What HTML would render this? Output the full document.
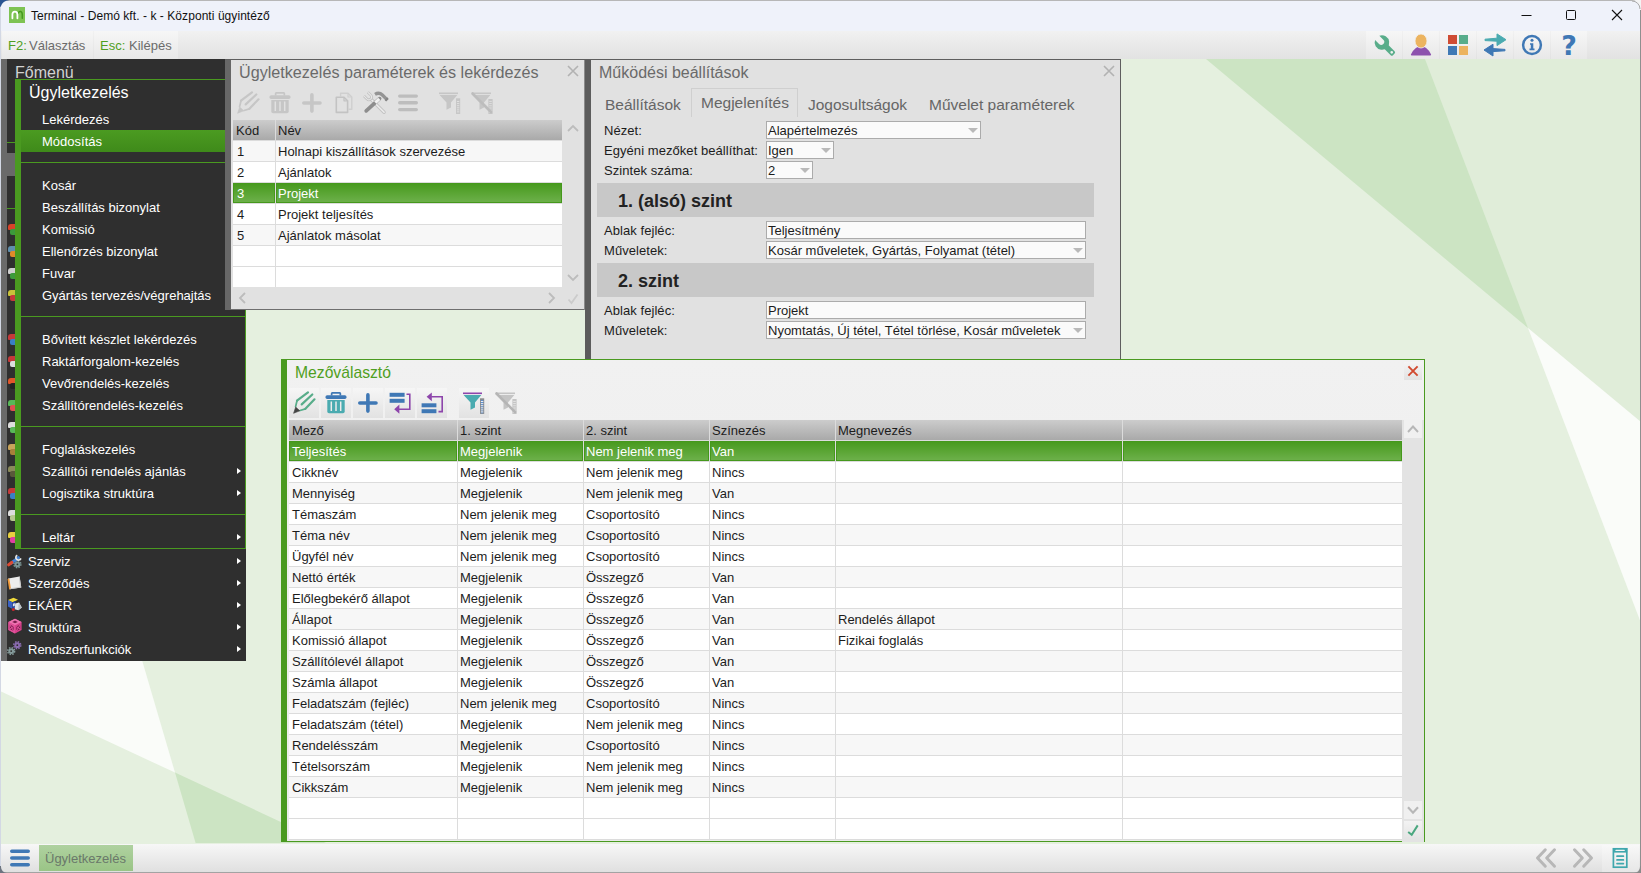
<!DOCTYPE html>
<html lang="hu"><head><meta charset="utf-8"><title>Terminal - Demó kft. - k - Központi ügyintéző</title>
<style>
*{box-sizing:border-box;margin:0;padding:0}
html,body{width:1641px;height:873px;overflow:hidden}
body{position:relative;background:#e5f0df;font-family:"Liberation Sans",sans-serif;font-size:13px;color:#1c1c1c;line-height:1}
.a{position:absolute}
svg{position:absolute;overflow:visible}
/* title bar */
#tb{left:0;top:0;width:1641px;height:31px;background:#eff2fa}
#tb .t{left:31px;top:10px;font-size:12px;color:#111;white-space:nowrap;letter-spacing:.06px}
#tool{left:0;top:31px;width:1641px;height:28px;background:linear-gradient(#f1f1f1,#e2e2e2)}
.tbtn{top:0;height:28px;background:linear-gradient(#f6f6f6,#e8e8e8)}
.tbtn span{position:absolute;top:8px;font-size:13px;white-space:nowrap}
.g{color:#4f9f22}.gr{color:#6b6b6b}
.ibtn{top:0;width:36px;height:28px;background:linear-gradient(#f6f6f6,#e8e8e8)}
/* menu */
#mm{left:1px;top:59px;width:245px;height:602px;background:#2f2f2f}
#mm .strip{left:0;top:0;width:6px;height:602px;background:#6a6a6a}
#sm{left:15px;top:79px;width:231px;height:470px;background:#2f2f2f;border-top:1px solid #4a9a20;border-bottom:1px solid #4a9a20;border-right:1px solid #4a9a20;border-left:6px solid #4a9a20}
.mi{left:0;height:22px;line-height:24px;color:#fff;font-size:13px;white-space:nowrap}
.sep{height:1px;background:#4a9a20}
.arr{width:0;height:0;border-left:4px solid #fff;border-top:3.5px solid transparent;border-bottom:3.5px solid transparent;margin-top:.5px}
/* panels */
.ptitle{font-size:16px;color:#6a6a6a;white-space:nowrap}
.hdr{background:linear-gradient(#d2d2d2,#aaaaaa);height:20px}
.hc{top:0;height:20px;line-height:21px;font-size:13px;color:#1c1c1c;white-space:nowrap;background:linear-gradient(#cccccc,#a9a9a9)}
.row{left:0;height:21px}
.c{top:0;height:20px;line-height:21px;font-size:13px;white-space:nowrap;overflow:hidden;background:#fff}
.alt .c{background:#f7f7f7}
.sel .c{background:linear-gradient(#46991c,#6eb14c);color:#fff;box-shadow:inset 0 0 0 1px #45981c}
.grid{background:#dcdcdc;overflow:hidden}
.lbl{font-size:13px;white-space:nowrap;color:#1c1c1c;letter-spacing:.06px}
.inp{height:17px;border:1px solid #ababab;background:#fafafa;font-size:13px;line-height:17px;padding-left:1px;white-space:nowrap;overflow:hidden;color:#1c1c1c}
.dd{width:0;height:0;border-top:5px solid #b9b9b9;border-left:5px solid transparent;border-right:5px solid transparent}
.sec{left:6px;width:497px;height:34px;background:#c8c8c8;font-weight:bold;font-size:18px;color:#222;line-height:36px;padding-left:21px;white-space:nowrap}
.b30{width:30px;height:30px;background:linear-gradient(#f6f6f6,#e2e2e2)}
</style></head><body>
<!-- bg.html -->
<svg class="a" style="left:0;top:59px" width="1641" height="784" viewBox="0 59 1641 784">
<rect x="0" y="59" width="1641" height="784" fill="#e5f0df"/>
<polygon points="1425,59 1641,59 1641,422 1528,328" fill="#e0edd9"/>
<polygon points="1206,59 1425,59 1528,328" fill="#cce4c3"/>
<polygon points="1528,328 1641,422 1641,623" fill="#fafcf9"/>
<polygon points="175,772.6 0,691 0,176" fill="#fafcf9"/>
<polygon points="175,772.6 195.6,843 326,843" fill="#cce4c3"/>
</svg>

<!-- titlebar.html -->
<div id="tb" class="a">
<svg style="left:9px;top:7px" width="16" height="16" viewBox="0 0 16 16"><rect width="16" height="16" fill="#7ec353"/><path d="M9.2 6.2c.5-1.2 1.4-1.8 2.4-1.6c1.3.3 1.7 1.6 1.7 3.2v3.4" fill="none" stroke="#459a1e" stroke-width="1.5" stroke-linecap="round"/><path d="M3.4 11.3V7.4c0-1.9.9-2.8 2.5-2.8s2.5.9 2.500 2.800v3.900" fill="none" stroke="#fff" stroke-width="1.8" stroke-linecap="round"/></svg>
<div class="a t">Terminal - Demó kft. - k - Központi ügyintéző</div>
<svg style="left:1515px;top:5px" width="120" height="20" viewBox="1515 5 120 20"><path d="M1521.5 15.5h10" stroke="#111" stroke-width="1" fill="none"/><rect x="1566.5" y="10.5" width="9" height="9" rx="1" fill="none" stroke="#111" stroke-width="1"/><path d="M1612 10l10 10M1622 10l-10 10" stroke="#111" stroke-width="1.1" fill="none"/></svg>
</div>
<div id="tool" class="a">
<div class="a tbtn" style="left:2px;width:91px"><span class="g" style="left:6px">F2:</span><span class="gr" style="left:27px">Választás</span></div>
<div class="a tbtn" style="left:94px;width:84px"><span class="g" style="left:6px">Esc:</span><span class="gr" style="left:35px">Kilépés</span></div>
<div class="a ibtn" style="left:1366px"></div>
<div class="a ibtn" style="left:1403px"></div>
<div class="a ibtn" style="left:1440px"></div>
<div class="a ibtn" style="left:1477px"></div>
<div class="a ibtn" style="left:1514px"></div>
<div class="a ibtn" style="left:1551px"></div>
<svg style="left:1366px;top:0" width="222" height="28" viewBox="1366 31 222 28">
<!-- wrench -->
<g transform="translate(1381.9,42.5) rotate(-45)"><path d="M-3 -6.65A7.3 7.3 0 1 0 3 -6.65V-1A3 3 0 0 1 -3 -1Z" fill="#59ad8a"/><path d="M-2.75 5V15.200A1.600 1.600 0 0 0 -1.150 16.8H1.150A1.600 1.600 0 0 0 2.75 15.200V5Z" fill="#59ad8a"/><circle cx="0" cy="13.9" r="1.35" fill="#efefef"/></g>
<!-- user -->
<path d="M1410.9 54.6Q1413 50 1415.6 48.2Q1417 47 1419 47H1423Q1425 47 1426.4 48.2Q1429 50 1431.1 54.6Q1431.3 55.4 1430.4 55.4H1411.6Q1410.700 55.4 1410.9 54.6Z" fill="#8d52ae"/>
<ellipse cx="1421" cy="41" rx="6" ry="7" fill="#ecb45f" stroke="#f1f1f1" stroke-width=".8"/>
<!-- squares -->
<rect x="1448" y="35" width="9" height="9" fill="#cf4c33"/><rect x="1459" y="35" width="9" height="9" fill="#58ad8a"/>
<rect x="1448" y="46" width="9" height="9" fill="#3f78b5"/><rect x="1459" y="46" width="9" height="9" fill="#ecb35f"/>
<!-- arrows -->
<path d="M1485 39.2 L1497 38.2 L1497 33.9 L1506 39.7 L1497 45.6 L1497 41.2 L1485 40.6z" fill="#4aabb0" stroke="#4aabb0" stroke-width="1" stroke-linejoin="round"/>
<path d="M1505 49.4 L1493 48.6 L1493 44.2 L1484 50 L1493 56 L1493 51.6 L1505 50.8z" fill="#3f78b5" stroke="#3f78b5" stroke-width="1" stroke-linejoin="round"/>
<!-- info -->
<circle cx="1532" cy="45" r="8.9" fill="none" stroke="#3f78b5" stroke-width="2.5"/>
<circle cx="1532" cy="40.2" r="1.5" fill="#3f78b5"/><path d="M1530 43.2h3.3v5.4h1.2v1.6h-5v-1.6h1.3v-3.8h-.8z" fill="#3f78b5"/>
<text x="1569" y="55" text-anchor="middle" font-family="DejaVu Sans, Liberation Sans, sans-serif" font-weight="bold" font-size="27" fill="#3f78b5">?</text>
</svg>
</div>

<!-- menu.html -->
<div id="mm" class="a">
<div class="a strip"></div>
<div class="a" style="left:14px;top:6px;font-size:16px;color:#d2d2d2;white-space:nowrap">Főmenü</div>
<div class="a sep" style="left:6px;top:83px;width:8px"></div>
<div class="a" style="left:6px;top:94px;width:8px;height:23px;background:#696969"></div>
<div class="a sep" style="left:6px;top:149px;width:8px"></div>
<div class="a" style="left:7px;top:165px;width:7px;height:6px;background:#d8432a;border-radius:3px 0 0 1px"></div><div class="a" style="left:9px;top:170px;width:5px;height:6px;background:#3c9a3c;border-radius:2px 0 0 2px"></div>
<div class="a" style="left:7px;top:187px;width:7px;height:6px;background:#5f8fae;border-radius:3px 0 0 1px"></div><div class="a" style="left:9px;top:192px;width:5px;height:6px;background:#e08a2a;border-radius:2px 0 0 2px"></div>
<div class="a" style="left:7px;top:209px;width:7px;height:6px;background:#cfcfcf;border-radius:3px 0 0 1px"></div><div class="a" style="left:9px;top:214px;width:5px;height:6px;background:#3c9a3c;border-radius:2px 0 0 2px"></div>
<div class="a" style="left:7px;top:231px;width:7px;height:6px;background:#c9c23a;border-radius:3px 0 0 1px"></div><div class="a" style="left:9px;top:236px;width:5px;height:6px;background:#c53a3a;border-radius:2px 0 0 2px"></div>
<div class="a" style="left:7px;top:275px;width:7px;height:6px;background:#c53a3a;border-radius:3px 0 0 1px"></div><div class="a" style="left:9px;top:280px;width:5px;height:6px;background:#3a7fc5;border-radius:2px 0 0 2px"></div>
<div class="a" style="left:7px;top:297px;width:7px;height:6px;background:#c53a3a;border-radius:3px 0 0 1px"></div><div class="a" style="left:9px;top:302px;width:5px;height:6px;background:#dddddd;border-radius:2px 0 0 2px"></div>
<div class="a" style="left:7px;top:319px;width:7px;height:6px;background:#e0562a;border-radius:3px 0 0 1px"></div><div class="a" style="left:9px;top:324px;width:5px;height:6px;background:#222222;border-radius:2px 0 0 2px"></div>
<div class="a" style="left:7px;top:341px;width:7px;height:6px;background:#58b858;border-radius:3px 0 0 1px"></div><div class="a" style="left:9px;top:346px;width:5px;height:6px;background:#e05050;border-radius:2px 0 0 2px"></div>
<div class="a" style="left:7px;top:363px;width:7px;height:6px;background:#dddddd;border-radius:3px 0 0 1px"></div><div class="a" style="left:9px;top:368px;width:5px;height:6px;background:#58b858;border-radius:2px 0 0 2px"></div>
<div class="a" style="left:7px;top:385px;width:7px;height:6px;background:#c9a45a;border-radius:3px 0 0 1px"></div><div class="a" style="left:9px;top:390px;width:5px;height:6px;background:#a8803a;border-radius:2px 0 0 2px"></div>
<div class="a" style="left:7px;top:407px;width:7px;height:6px;background:#8a8a5a;border-radius:3px 0 0 1px"></div><div class="a" style="left:9px;top:412px;width:5px;height:6px;background:#5a5a3a;border-radius:2px 0 0 2px"></div>
<div class="a" style="left:7px;top:429px;width:7px;height:6px;background:#c53a3a;border-radius:3px 0 0 1px"></div><div class="a" style="left:9px;top:434px;width:5px;height:6px;background:#3a7fc5;border-radius:2px 0 0 2px"></div>
<div class="a" style="left:7px;top:451px;width:7px;height:6px;background:#dddddd;border-radius:3px 0 0 1px"></div><div class="a" style="left:9px;top:456px;width:5px;height:6px;background:#b8c890;border-radius:2px 0 0 2px"></div>
<div class="a" style="left:7px;top:473px;width:7px;height:6px;background:#e8d040;border-radius:3px 0 0 1px"></div><div class="a" style="left:9px;top:478px;width:5px;height:6px;background:#e040a0;border-radius:2px 0 0 2px"></div>
<div class="a mi" style="left:27px;top:491px">Szerviz</div><div class="a arr" style="left:236px;top:498px"></div>
<div class="a mi" style="left:27px;top:513px">Szerződés</div><div class="a arr" style="left:236px;top:520px"></div>
<div class="a mi" style="left:27px;top:535px">EKÁER</div><div class="a arr" style="left:236px;top:542px"></div>
<div class="a mi" style="left:27px;top:557px">Struktúra</div><div class="a arr" style="left:236px;top:564px"></div>
<div class="a mi" style="left:27px;top:579px">Rendszerfunkciók</div><div class="a arr" style="left:236px;top:586px"></div>
<svg style="left:6px;top:492px" width="16" height="110" viewBox="0 0 16 110">
<g><circle cx="10.4" cy="13.3" r="2.9" fill="#7c9797"/><circle cx="10.4" cy="13.3" r="3.5" fill="none" stroke="#7c9797" stroke-width="1.4" stroke-dasharray="1.55 1.2"/><circle cx="10.4" cy="13.3" r=".9" fill="#2f2f2f"/><path d="M4 12.2L11.400 6.700" stroke="#3f80d6" stroke-width="3" stroke-linecap="round"/><path d="M1.700 13.800L4.800 11.500" stroke="#dc4a33" stroke-width="3.2" stroke-linecap="round"/><path d="M10.300 4.200a2.600 2.600 0 1 0 3.600 3.200" fill="none" stroke="#e4e4e4" stroke-width="1.700"/></g>
<g transform="translate(0,22)"><path d="M1.200 5.600L12.600 3.400L14.300 14.600L2.800 16.300z" fill="#ededed"/><path d="M.500 6L2.300 5.500L4 16L2.200 16.500z" fill="#f09a3a"/><path d="M12.600 3.400L14.300 14.600L2.800 16.300L3.400 15.300L13 13.800L11.800 3.600z" fill="#c9c9c9"/></g>
<g transform="translate(0,44)"><path d="M1 5L6.500 2.800L11 4.800L5.500 7.200z" fill="#f2dc3c"/><path d="M1 5L5.500 7.200V14L1 11.600z" fill="#3b62c4"/><path d="M5.500 7.200L8.500 6V12.500L5.500 14z" fill="#2447a8"/><path d="M8.200 8.600L12 7.400L14.800 12.600L11.400 15.200L7.600 14.300z" fill="#e1e5e8"/><path d="M11.400 15.200L14.800 12.600L12 7.400L11.400 11z" fill="#b9c0c6"/><circle cx="6.300" cy="14.500" r="1.500" fill="#c2282d"/><path d="M5.900 8.800l1.900-.700v2.600l-1.900.700z" fill="#e8e8e8"/></g>
<g transform="translate(0,66)"><path d="M8 1.800L14.600 5V13L8 16.400L1.400 13V5z" fill="#d9408c"/><path d="M8 1.800L14.600 5L8 8.200L1.400 5z" fill="#ee74b2"/><path d="M8 8.200V16.400L1.400 13V5z" fill="#e0529a"/><path d="M2.800 7.600L6.600 9.500V14L2.800 12.100z M13.200 7.600L9.400 9.500V14L13.200 12.100z" fill="#7a1c4d"/><path d="M2.800 7.600L6.600 14M6.600 9.500L2.800 12.100M13.200 7.600L9.400 14M9.400 9.500L13.200 12.100" stroke="#e0529a" stroke-width="1"/><path d="M5.200 4.900L8 3.600L10.800 4.900L8 6.300z" fill="#7a1c4d"/></g>
<g transform="translate(0,88)"><circle cx="10.3" cy="6.2" r="2.9" fill="#8a6cb0"/><circle cx="10.3" cy="6.2" r="3.5" fill="none" stroke="#8a6cb0" stroke-width="1.4" stroke-dasharray="1.55 1.2"/><circle cx="10.3" cy="6.2" r=".9" fill="#2f2f2f"/><circle cx="4.2" cy="12.1" r="2.9" fill="#849a9a"/><circle cx="4.2" cy="12.1" r="3.5" fill="none" stroke="#849a9a" stroke-width="1.4" stroke-dasharray="1.55 1.2"/><circle cx="4.2" cy="12.1" r=".9" fill="#2f2f2f"/></g>
</svg>
</div>
<div id="sm" class="a">
<div class="a" style="left:8px;top:5px;font-size:16px;color:#fff;white-space:nowrap">Ügyletkezelés</div>
<div class="a mi" style="left:21px;top:28px">Lekérdezés</div>
<div class="a" style="left:0;top:50px;width:224px;height:22px;background:linear-gradient(#4b9b21,#3f8a1a)"></div>
<div class="a mi" style="left:21px;top:50px">Módosítás</div>
<div class="a mi" style="left:21px;top:94px">Kosár</div>
<div class="a mi" style="left:21px;top:116px">Beszállítás bizonylat</div>
<div class="a mi" style="left:21px;top:138px">Komissió</div>
<div class="a mi" style="left:21px;top:160px">Ellenőrzés bizonylat</div>
<div class="a mi" style="left:21px;top:182px">Fuvar</div>
<div class="a mi" style="left:21px;top:204px">Gyártás tervezés/végrehajtás</div>
<div class="a mi" style="left:21px;top:248px">Bővített készlet lekérdezés</div>
<div class="a mi" style="left:21px;top:270px">Raktárforgalom-kezelés</div>
<div class="a mi" style="left:21px;top:292px">Vevőrendelés-kezelés</div>
<div class="a mi" style="left:21px;top:314px">Szállítórendelés-kezelés</div>
<div class="a mi" style="left:21px;top:358px">Foglaláskezelés</div>
<div class="a mi" style="left:21px;top:380px">Szállítói rendelés ajánlás</div>
<div class="a arr" style="left:216px;top:387px"></div>
<div class="a mi" style="left:21px;top:402px">Logisztika struktúra</div>
<div class="a arr" style="left:216px;top:409px"></div>
<div class="a mi" style="left:21px;top:446px">Leltár</div>
<div class="a arr" style="left:216px;top:453px"></div>
<div class="a sep" style="left:0;top:82px;width:225px"></div>
<div class="a sep" style="left:0;top:236px;width:225px"></div>
<div class="a sep" style="left:0;top:346px;width:225px"></div>
<div class="a sep" style="left:0;top:434px;width:225px"></div>
</div>
<!-- panel1.html -->
<div id="p1" class="a" style="left:225px;top:59px;width:360px;height:251px;background:#e1e1e1">
<div class="a" style="left:0;top:0;width:6px;height:251px;background:#676767"></div>
<div class="a" style="left:0;top:0;width:360px;height:1px;background:#5e5e5e"></div>
<div class="a" style="left:6px;top:250px;width:354px;height:1px;background:#6e6e6e"></div>
<div class="a" style="left:359px;top:1px;width:1px;height:250px;background:#8c8c8c"></div>
<div class="a ptitle" style="left:14px;top:5px;font-size:16.15px">Ügyletkezelés paraméterek és lekérdezés</div>
<svg style="left:342px;top:6px" width="12" height="12" viewBox="0 0 12 12"><path d="M1 1l10 10M11 1L1 11" stroke="#b2b2b2" stroke-width="1.6" fill="none"/></svg>
<svg style="left:8px;top:29px" width="280" height="30" viewBox="233 88 280 30">
<g transform="translate(-56,-300)"><g fill="none" stroke="#c6c6c6" stroke-width="2.2" stroke-linecap="round" stroke-linejoin="round"><path d="M297 400.7L308 392.3M301.7 404.4L312.3 394.5M305.4 408.8L314.5 399.3"/><path d="M297 400.7L295.6 406.6M305.4 408.8L300 410.5" stroke-width="1.76"/></g><path d="M293.6 413.3L295.7 407.1L299.8 410.8z" fill="#c6c6c6" stroke="#c6c6c6" stroke-width=".6" stroke-linejoin="round"/><g fill="#c6c6c6"><rect x="325.5" y="395.2" width="21" height="3.7" rx="1.6"/><path d="M330.8 395.4v-1.8a1.5 1.5 0 0 1 1.5-1.5h7.4a1.5 1.5 0 0 1 1.5 1.5v1.8h-1.7v-1.6h-7v1.6z"/></g><path d="M327.3 400h17.4v11.6a1.7 1.7 0 0 1-1.7 1.7h-14a1.7 1.7 0 0 1-1.7-1.7z" fill="#c6c6c6"/><path d="M331.3 401.5v9.6M336 401.5v9.6M340.7 401.5v9.6" stroke="#e1e1e1" stroke-width="1.5"/><path d="M359.8 403h16.2M367.9 394.9v16.2" stroke="#c6c6c6" stroke-width="3.6" stroke-linecap="round" fill="none"/></g>
<g transform="translate(0,0)">
<g fill="none" stroke-linejoin="round"><path d="M340.600 96.600V93.200H348L351.800 97V109.200H348.600" stroke="#cfcfcf" stroke-width="1.400"/><path d="M348 93.200V97H351.800" stroke="#cfcfcf" stroke-width="1.200"/><path d="M336.300 97.200H344L347.600 100.800V112.400H336.300Z" stroke="#c3c3c3" stroke-width="1.600"/><path d="M344 97.200V100.800H347.600" stroke="#c3c3c3" stroke-width="1.300"/></g>
<g fill="none"><g transform="translate(369.600,97.800) rotate(-45)"><path d="M0 2V20.500" stroke="#c4c4c4" stroke-width="3.400" stroke-linecap="round"/><path d="M0 3V20.500" stroke="#ececec" stroke-width="1.500" stroke-linecap="round"/><path d="M-2.700 -5.200V-1A2.700 2.700 0 0 0 2.700 -1V-5.200" stroke="#c2c2c2" stroke-width="2.600"/><path d="M-2.700 -5V-1A2.700 2.700 0 0 0 2.700 -1V-5" stroke="#eaeaea" stroke-width="1"/></g><path d="M366.200 110.900L379.600 98.600" stroke="#8d8d8d" stroke-width="3.700" stroke-linecap="round"/><path d="M375.300 102.600L379.300 98.900" stroke="#f1f1f1" stroke-width="3.200"/><path d="M375 94.300Q379 91.800 382.400 95L387 99.600" stroke="#949494" stroke-width="3.300"/><path d="M385.400 100.700L388 98.100" stroke="#858585" stroke-width="2.200"/></g>
<path d="M399.700 96.100h16.600M399.700 102.800h16.600M399.700 109.600h16.600" stroke="#bdbdbd" stroke-width="3.400" stroke-linecap="round" fill="none"/>
</g>
<g transform="translate(-24,-300)"><rect x="463" y="392.5" width="19" height="1.6" fill="#c6c6c6"/><path d="M463.6 395h17.7l-6.3 7.4v5l-4.5 2.4v-7.4z" fill="#c6c6c6"/><rect x="480" y="398.3" width="4.2" height="15.6" fill="#c6c6c6"/><path d="M480.9 400.4h2.4M480.9 402.5h2.4M480.9 404.6h2.4M480.9 406.7h2.4M480.9 408.8h2.4M480.9 410.9h2.4M480.9 412.8h2.4" stroke="#c6c6c6" stroke-width="1"/><path d="M480.9 401.5h2.4M480.9 403.6h2.4M480.9 405.7h2.4M480.9 407.8h2.4M480.9 409.9h2.4M480.9 411.9h2.4" stroke="#e1e1e1" stroke-width="1"/></g>
<g transform="translate(-24,-300)"><g fill="#c6c6c6"><rect x="496" y="392.5" width="19" height="1.6"/><path d="M496.6 395h17.7l-6.3 7.4v5l-4.5 2.4v-7.4z"/><rect x="512.4" y="399" width="4.2" height="15"/></g><path d="M513.2 401.4h2.6M513.2 403.6h2.6M513.2 405.8h2.6M513.2 408h2.6M513.2 410.2h2.6M513.2 412.4h2.6" stroke="#e1e1e1" stroke-width=".9"/><path d="M496.5 393.5l18.5 18.5" stroke="#bdbdbd" stroke-width="2.6" stroke-linecap="round"/></g>
</svg>
<div class="a grid" style="left:8px;top:61px;width:329px;height:167px">
<div class="a hc" style="left:0;width:42px;padding-left:3px">Kód</div><div class="a hc" style="left:43px;width:286px;padding-left:2px">Név</div>
<div class="row a alt" style="top:21px;width:329px"><div class="a c" style="left:0;width:42px;padding-left:4px">1</div><div class="a c" style="left:43px;width:286px;padding-left:2px">Holnapi kiszállítások szervezése</div></div>
<div class="row a" style="top:42px;width:329px"><div class="a c" style="left:0;width:42px;padding-left:4px">2</div><div class="a c" style="left:43px;width:286px;padding-left:2px">Ajánlatok</div></div>
<div class="row a sel" style="top:63px;width:329px"><div class="a c" style="left:0;width:42px;padding-left:4px">3</div><div class="a c" style="left:43px;width:286px;padding-left:2px">Projekt</div></div>
<div class="row a" style="top:84px;width:329px"><div class="a c" style="left:0;width:42px;padding-left:4px">4</div><div class="a c" style="left:43px;width:286px;padding-left:2px">Projekt teljesítés</div></div>
<div class="row a alt" style="top:105px;width:329px"><div class="a c" style="left:0;width:42px;padding-left:4px">5</div><div class="a c" style="left:43px;width:286px;padding-left:2px">Ajánlatok másolat</div></div>
<div class="row a" style="top:126px;width:329px"><div class="a c" style="left:0;width:42px;padding-left:4px"></div><div class="a c" style="left:43px;width:286px;padding-left:2px"></div></div>
<div class="row a" style="top:147px;width:329px"><div class="a c" style="left:0;width:42px;padding-left:4px"></div><div class="a c" style="left:43px;width:286px;padding-left:2px"></div></div>
</div>
<svg style="left:338px;top:61px" width="22" height="190" viewBox="563 120 22 190" fill="none" stroke="#bcbcbc" stroke-width="1.8"><path d="M568 131l5-5l5 5"/><path d="M568 275l5 5l5-5"/><path d="M568.5 299.5l3 3.5l6-8.5" stroke="#cbcbcb"/></svg>
<svg style="left:8px;top:229px" width="330" height="20" viewBox="233 288 330 20" fill="none" stroke="#bcbcbc" stroke-width="1.8"><path d="M245 293l-5 5l5 5"/><path d="M549 293l5 5l-5 5"/></svg>
</div>
<!-- panel2.html -->
<div id="p2" class="a" style="left:585px;top:59px;width:536px;height:301px;background:#e1e1e1">
<div class="a" style="left:0;top:0;width:6px;height:301px;background:#5c5c5c"></div>
<div class="a" style="left:0;top:0;width:536px;height:1px;background:#5e5e5e"></div>
<div class="a" style="left:535px;top:0;width:1px;height:301px;background:#5e5e5e"></div>
<div class="a ptitle" style="left:14px;top:6px">Működési beállítások</div>
<svg style="left:518px;top:6px" width="12" height="12" viewBox="0 0 12 12"><path d="M1 1l10 10M11 1L1 11" stroke="#b2b2b2" stroke-width="1.6" fill="none"/></svg>
<div class="a" style="left:106px;top:29px;width:107px;height:29px;border:1px solid #cfcfcf;border-bottom:none"></div>
<div class="a" style="left:20px;top:38px;font-size:15.5px;color:#666;white-space:nowrap">Beállítások</div>
<div class="a" style="left:116px;top:36px;font-size:15.5px;color:#666;white-space:nowrap">Megjelenítés</div>
<div class="a" style="left:223px;top:38px;font-size:15.5px;color:#666;white-space:nowrap">Jogosultságok</div>
<div class="a" style="left:344px;top:38px;font-size:15.5px;color:#666;white-space:nowrap">Művelet paraméterek</div>
<div class="a lbl" style="left:19px;top:65px">Nézet:</div>
<div class="a inp" style="left:181px;top:62px;width:215px;height:18px">Alapértelmezés</div>
<div class="a dd" style="left:382.5px;top:68.5px"></div>
<div class="a lbl" style="left:19px;top:85px">Egyéni mezőket beállíthat:</div>
<div class="a inp" style="left:181px;top:82px;width:68px;height:18px">Igen</div>
<div class="a dd" style="left:235.5px;top:88.5px"></div>
<div class="a lbl" style="left:19px;top:105px">Szintek száma:</div>
<div class="a inp" style="left:181px;top:102px;width:47px;height:18px">2</div>
<div class="a dd" style="left:214.5px;top:108.5px"></div>
<div class="a sec" style="left:12px;top:124px">1. (alsó) szint</div>
<div class="a lbl" style="left:19px;top:165px">Ablak fejléc:</div>
<div class="a inp" style="left:181px;top:162px;width:320px;height:18px">Teljesítmény</div>
<div class="a lbl" style="left:19px;top:185px">Műveletek:</div>
<div class="a inp" style="left:181px;top:182px;width:320px;height:18px">Kosár műveletek, Gyártás, Folyamat (tétel)</div>
<div class="a dd" style="left:487.5px;top:188.5px"></div>
<div class="a sec" style="left:12px;top:204px">2. szint</div>
<div class="a lbl" style="left:19px;top:245px">Ablak fejléc:</div>
<div class="a inp" style="left:181px;top:242px;width:320px;height:18px">Projekt</div>
<div class="a lbl" style="left:19px;top:265px">Műveletek:</div>
<div class="a inp" style="left:181px;top:262px;width:320px;height:18px">Nyomtatás, Új tétel, Tétel törlése, Kosár műveletek</div>
<div class="a dd" style="left:487.5px;top:268.5px"></div>
</div>
<!-- panel3.html -->
<div id="p3" class="a" style="left:281px;top:359px;width:1144px;height:483px;background:linear-gradient(#f1f1f1,#ebebeb)">
<div class="a" style="left:0;top:0;width:6px;height:483px;background:#4a9a20"></div>
<div class="a" style="left:0;top:0;width:1144px;height:1px;background:#4a9a20"></div>
<div class="a" style="left:1143px;top:0;width:1px;height:483px;background:#4a9a20"></div>
<div class="a" style="left:0;top:482px;width:1144px;height:1px;background:#4a9a20"></div>
<div class="a ptitle" style="left:14px;top:6px;color:#4f9f22;font-size:15.7px">Mezőválasztó</div>
<div class="a" style="left:1123px;top:3px;width:18px;height:18px;background:linear-gradient(#f4f4f4,#e2e2e2)"></div>
<svg style="left:1127px;top:7px" width="10" height="10" viewBox="0 0 10 10"><path d="M.4 .4l9.200 9.200M9.600 .4L.4 9.600" stroke="#d1492f" stroke-width="1.9" fill="none"/></svg>
<div class="a b30" style="left:8px;top:29px"></div>
<div class="a b30" style="left:40px;top:29px"></div>
<div class="a b30" style="left:72px;top:29px"></div>
<div class="a b30" style="left:104px;top:29px"></div>
<div class="a b30" style="left:136px;top:29px"></div>
<div class="a b30" style="left:178px;top:29px"></div>
<svg style="left:8px;top:29px" width="240" height="30" viewBox="289 388 240 30">
<g fill="none" stroke="#58ad8a" stroke-width="2.2" stroke-linecap="round" stroke-linejoin="round"><path d="M297 400.7L308 392.3M301.7 404.4L312.3 394.5M305.4 408.8L314.5 399.3"/><path d="M297 400.7L295.6 406.6M305.4 408.8L300 410.5" stroke-width="1.76"/></g><path d="M293.6 413.3L295.7 407.1L299.8 410.8z" fill="#444" stroke="#444" stroke-width=".6" stroke-linejoin="round"/>
<g fill="#3f78b5"><rect x="325.5" y="395.2" width="21" height="3.7" rx="1.6"/><path d="M330.8 395.4v-1.8a1.5 1.5 0 0 1 1.5-1.5h7.4a1.5 1.5 0 0 1 1.5 1.5v1.8h-1.7v-1.6h-7v1.6z"/></g><path d="M327.3 400h17.4v11.6a1.7 1.7 0 0 1-1.7 1.7h-14a1.7 1.7 0 0 1-1.7-1.7z" fill="#4aabb0"/><path d="M331.3 401.5v9.6M336 401.5v9.6M340.7 401.5v9.6" stroke="#ececec" stroke-width="1.5"/>
<path d="M359.8 403h16.2M367.9 394.9v16.2" stroke="#3f78b5" stroke-width="3.6" stroke-linecap="round" fill="none"/>
<rect x="389.6" y="392.8" width="15" height="4" fill="#3f78b5"/><rect x="389.6" y="398.8" width="15" height="4" fill="#3f78b5"/><path d="M406.5 394.2h3.3v15h-11" fill="none" stroke="#8d45ab" stroke-width="1.6"/><path d="M394.2 409.2l5.2-4.6v9.2z" fill="#8d45ab"/>
<rect x="421.6" y="403.3" width="14.8" height="4" fill="#3f78b5"/><rect x="421.6" y="409.2" width="14.8" height="4" fill="#3f78b5"/><path d="M438.5 411.6h3.7v-14.8h-11" fill="none" stroke="#8d45ab" stroke-width="1.6"/><path d="M426.6 396.8l5.2-4.2v8.6z" fill="#8d45ab"/>
<rect x="463" y="392.5" width="19" height="1.6" fill="#8d45ab"/><path d="M463.6 395h17.7l-6.3 7.4v5l-4.5 2.4v-7.4z" fill="#4aabb0"/><rect x="480" y="398.3" width="4.2" height="15.6" fill="#8a8a8a"/><path d="M480.9 400.4h2.4M480.9 402.5h2.4M480.9 404.6h2.4M480.9 406.7h2.4M480.9 408.8h2.4M480.9 410.9h2.4M480.9 412.8h2.4" stroke="#5b8fd0" stroke-width="1"/><path d="M480.9 401.5h2.4M480.9 403.6h2.4M480.9 405.7h2.4M480.9 407.8h2.4M480.9 409.9h2.4M480.9 411.9h2.4" stroke="#e8eef7" stroke-width="1"/>
<g fill="#c4c4c4"><rect x="496" y="392.5" width="19" height="1.6"/><path d="M496.6 395h17.7l-6.3 7.4v5l-4.5 2.4v-7.4z"/><rect x="512.4" y="399" width="4.2" height="15"/></g><path d="M513.2 401.4h2.6M513.2 403.6h2.6M513.2 405.8h2.6M513.2 408h2.6M513.2 410.2h2.6M513.2 412.4h2.6" stroke="#e8e8e8" stroke-width=".9"/><path d="M496.5 393.5l18.5 18.5" stroke="#b5b5b5" stroke-width="2.6" stroke-linecap="round"/>
</svg>
<div class="a grid" style="left:8px;top:61px;width:1113px;height:420px">
<div class="a hc" style="left:0px;width:168px;padding-left:3px">Mező</div>
<div class="a hc" style="left:169px;width:125px;padding-left:2px">1. szint</div>
<div class="a hc" style="left:295px;width:125px;padding-left:2px">2. szint</div>
<div class="a hc" style="left:421px;width:125px;padding-left:2px">Színezés</div>
<div class="a hc" style="left:547px;width:286px;padding-left:2px">Megnevezés</div>
<div class="a hc" style="left:834px;width:279px;padding-left:2px"></div>
<div class="row a sel" style="top:21px;width:1113px"><div class="a c" style="left:0px;width:168px;padding-left:3px">Teljesítés</div><div class="a c" style="left:169px;width:125px;padding-left:2px">Megjelenik</div><div class="a c" style="left:295px;width:125px;padding-left:2px">Nem jelenik meg</div><div class="a c" style="left:421px;width:125px;padding-left:2px">Van</div><div class="a c" style="left:547px;width:286px;padding-left:2px"></div><div class="a c" style="left:834px;width:279px;padding-left:2px"></div></div>
<div class="row a" style="top:42px;width:1113px"><div class="a c" style="left:0px;width:168px;padding-left:3px">Cikknév</div><div class="a c" style="left:169px;width:125px;padding-left:2px">Megjelenik</div><div class="a c" style="left:295px;width:125px;padding-left:2px">Nem jelenik meg</div><div class="a c" style="left:421px;width:125px;padding-left:2px">Nincs</div><div class="a c" style="left:547px;width:286px;padding-left:2px"></div><div class="a c" style="left:834px;width:279px;padding-left:2px"></div></div>
<div class="row a alt" style="top:63px;width:1113px"><div class="a c" style="left:0px;width:168px;padding-left:3px">Mennyiség</div><div class="a c" style="left:169px;width:125px;padding-left:2px">Megjelenik</div><div class="a c" style="left:295px;width:125px;padding-left:2px">Nem jelenik meg</div><div class="a c" style="left:421px;width:125px;padding-left:2px">Van</div><div class="a c" style="left:547px;width:286px;padding-left:2px"></div><div class="a c" style="left:834px;width:279px;padding-left:2px"></div></div>
<div class="row a" style="top:84px;width:1113px"><div class="a c" style="left:0px;width:168px;padding-left:3px">Témaszám</div><div class="a c" style="left:169px;width:125px;padding-left:2px">Nem jelenik meg</div><div class="a c" style="left:295px;width:125px;padding-left:2px">Csoportosító</div><div class="a c" style="left:421px;width:125px;padding-left:2px">Nincs</div><div class="a c" style="left:547px;width:286px;padding-left:2px"></div><div class="a c" style="left:834px;width:279px;padding-left:2px"></div></div>
<div class="row a alt" style="top:105px;width:1113px"><div class="a c" style="left:0px;width:168px;padding-left:3px">Téma név</div><div class="a c" style="left:169px;width:125px;padding-left:2px">Nem jelenik meg</div><div class="a c" style="left:295px;width:125px;padding-left:2px">Csoportosító</div><div class="a c" style="left:421px;width:125px;padding-left:2px">Nincs</div><div class="a c" style="left:547px;width:286px;padding-left:2px"></div><div class="a c" style="left:834px;width:279px;padding-left:2px"></div></div>
<div class="row a" style="top:126px;width:1113px"><div class="a c" style="left:0px;width:168px;padding-left:3px">Ügyfél név</div><div class="a c" style="left:169px;width:125px;padding-left:2px">Nem jelenik meg</div><div class="a c" style="left:295px;width:125px;padding-left:2px">Csoportosító</div><div class="a c" style="left:421px;width:125px;padding-left:2px">Nincs</div><div class="a c" style="left:547px;width:286px;padding-left:2px"></div><div class="a c" style="left:834px;width:279px;padding-left:2px"></div></div>
<div class="row a alt" style="top:147px;width:1113px"><div class="a c" style="left:0px;width:168px;padding-left:3px">Nettó érték</div><div class="a c" style="left:169px;width:125px;padding-left:2px">Megjelenik</div><div class="a c" style="left:295px;width:125px;padding-left:2px">Összegző</div><div class="a c" style="left:421px;width:125px;padding-left:2px">Van</div><div class="a c" style="left:547px;width:286px;padding-left:2px"></div><div class="a c" style="left:834px;width:279px;padding-left:2px"></div></div>
<div class="row a" style="top:168px;width:1113px"><div class="a c" style="left:0px;width:168px;padding-left:3px">Előlegbekérő állapot</div><div class="a c" style="left:169px;width:125px;padding-left:2px">Megjelenik</div><div class="a c" style="left:295px;width:125px;padding-left:2px">Összegző</div><div class="a c" style="left:421px;width:125px;padding-left:2px">Van</div><div class="a c" style="left:547px;width:286px;padding-left:2px"></div><div class="a c" style="left:834px;width:279px;padding-left:2px"></div></div>
<div class="row a alt" style="top:189px;width:1113px"><div class="a c" style="left:0px;width:168px;padding-left:3px">Állapot</div><div class="a c" style="left:169px;width:125px;padding-left:2px">Megjelenik</div><div class="a c" style="left:295px;width:125px;padding-left:2px">Összegző</div><div class="a c" style="left:421px;width:125px;padding-left:2px">Van</div><div class="a c" style="left:547px;width:286px;padding-left:2px">Rendelés állapot</div><div class="a c" style="left:834px;width:279px;padding-left:2px"></div></div>
<div class="row a" style="top:210px;width:1113px"><div class="a c" style="left:0px;width:168px;padding-left:3px">Komissió állapot</div><div class="a c" style="left:169px;width:125px;padding-left:2px">Megjelenik</div><div class="a c" style="left:295px;width:125px;padding-left:2px">Összegző</div><div class="a c" style="left:421px;width:125px;padding-left:2px">Van</div><div class="a c" style="left:547px;width:286px;padding-left:2px">Fizikai foglalás</div><div class="a c" style="left:834px;width:279px;padding-left:2px"></div></div>
<div class="row a alt" style="top:231px;width:1113px"><div class="a c" style="left:0px;width:168px;padding-left:3px">Szállítólevél állapot</div><div class="a c" style="left:169px;width:125px;padding-left:2px">Megjelenik</div><div class="a c" style="left:295px;width:125px;padding-left:2px">Összegző</div><div class="a c" style="left:421px;width:125px;padding-left:2px">Van</div><div class="a c" style="left:547px;width:286px;padding-left:2px"></div><div class="a c" style="left:834px;width:279px;padding-left:2px"></div></div>
<div class="row a" style="top:252px;width:1113px"><div class="a c" style="left:0px;width:168px;padding-left:3px">Számla állapot</div><div class="a c" style="left:169px;width:125px;padding-left:2px">Megjelenik</div><div class="a c" style="left:295px;width:125px;padding-left:2px">Összegző</div><div class="a c" style="left:421px;width:125px;padding-left:2px">Van</div><div class="a c" style="left:547px;width:286px;padding-left:2px"></div><div class="a c" style="left:834px;width:279px;padding-left:2px"></div></div>
<div class="row a alt" style="top:273px;width:1113px"><div class="a c" style="left:0px;width:168px;padding-left:3px">Feladatszám (fejléc)</div><div class="a c" style="left:169px;width:125px;padding-left:2px">Nem jelenik meg</div><div class="a c" style="left:295px;width:125px;padding-left:2px">Csoportosító</div><div class="a c" style="left:421px;width:125px;padding-left:2px">Nincs</div><div class="a c" style="left:547px;width:286px;padding-left:2px"></div><div class="a c" style="left:834px;width:279px;padding-left:2px"></div></div>
<div class="row a" style="top:294px;width:1113px"><div class="a c" style="left:0px;width:168px;padding-left:3px">Feladatszám (tétel)</div><div class="a c" style="left:169px;width:125px;padding-left:2px">Megjelenik</div><div class="a c" style="left:295px;width:125px;padding-left:2px">Nem jelenik meg</div><div class="a c" style="left:421px;width:125px;padding-left:2px">Nincs</div><div class="a c" style="left:547px;width:286px;padding-left:2px"></div><div class="a c" style="left:834px;width:279px;padding-left:2px"></div></div>
<div class="row a alt" style="top:315px;width:1113px"><div class="a c" style="left:0px;width:168px;padding-left:3px">Rendelésszám</div><div class="a c" style="left:169px;width:125px;padding-left:2px">Megjelenik</div><div class="a c" style="left:295px;width:125px;padding-left:2px">Csoportosító</div><div class="a c" style="left:421px;width:125px;padding-left:2px">Nincs</div><div class="a c" style="left:547px;width:286px;padding-left:2px"></div><div class="a c" style="left:834px;width:279px;padding-left:2px"></div></div>
<div class="row a" style="top:336px;width:1113px"><div class="a c" style="left:0px;width:168px;padding-left:3px">Tételsorszám</div><div class="a c" style="left:169px;width:125px;padding-left:2px">Megjelenik</div><div class="a c" style="left:295px;width:125px;padding-left:2px">Nem jelenik meg</div><div class="a c" style="left:421px;width:125px;padding-left:2px">Nincs</div><div class="a c" style="left:547px;width:286px;padding-left:2px"></div><div class="a c" style="left:834px;width:279px;padding-left:2px"></div></div>
<div class="row a alt" style="top:357px;width:1113px"><div class="a c" style="left:0px;width:168px;padding-left:3px">Cikkszám</div><div class="a c" style="left:169px;width:125px;padding-left:2px">Megjelenik</div><div class="a c" style="left:295px;width:125px;padding-left:2px">Nem jelenik meg</div><div class="a c" style="left:421px;width:125px;padding-left:2px">Nincs</div><div class="a c" style="left:547px;width:286px;padding-left:2px"></div><div class="a c" style="left:834px;width:279px;padding-left:2px"></div></div>
<div class="row a" style="top:378px;width:1113px"><div class="a c" style="left:0px;width:168px;padding-left:3px"></div><div class="a c" style="left:169px;width:125px;padding-left:2px"></div><div class="a c" style="left:295px;width:125px;padding-left:2px"></div><div class="a c" style="left:421px;width:125px;padding-left:2px"></div><div class="a c" style="left:547px;width:286px;padding-left:2px"></div><div class="a c" style="left:834px;width:279px;padding-left:2px"></div></div>
<div class="row a" style="top:399px;width:1113px"><div class="a c" style="left:0px;width:168px;padding-left:3px"></div><div class="a c" style="left:169px;width:125px;padding-left:2px"></div><div class="a c" style="left:295px;width:125px;padding-left:2px"></div><div class="a c" style="left:421px;width:125px;padding-left:2px"></div><div class="a c" style="left:547px;width:286px;padding-left:2px"></div><div class="a c" style="left:834px;width:279px;padding-left:2px"></div></div>
</div>
<div class="a" style="left:1121px;top:61px;width:22px;height:422px;background:#e3e3e3"></div>
<div class="a" style="left:1123px;top:61px;width:18px;height:18px;background:#f0f0f0"></div>
<div class="a" style="left:1123px;top:442px;width:18px;height:18px;background:#f0f0f0"></div>
<div class="a" style="left:1123px;top:462px;width:18px;height:18px;background:linear-gradient(#f3f3f3,#e3e3e3)"></div>
<svg style="left:1121px;top:61px" width="21" height="420" viewBox="1402 420 21 420" fill="none" stroke="#b7b7b7" stroke-width="1.9"><path d="M1408 432l5-5.500l5 5.500"/><path d="M1408 807.300l5 5.400l5-5.400" stroke-width="2.2"/><path d="M1408.200 832l3.500 2.700l6-9.300" stroke="#4aa77f" stroke-width="2"/></svg>
</div>
<!-- bottom.html -->
<div id="bot" class="a" style="left:0;top:844px;width:1641px;height:29px;background:linear-gradient(#f7f7f7,#dfdfdf)">
<div class="a" style="left:39px;top:1px;width:94px;height:26px;background:linear-gradient(#afd1a0,#9ac486)"></div>
<div class="a" style="left:45px;top:8px;font-size:13px;color:#6a786a;white-space:nowrap">Ügyletkezelés</div>
<svg style="left:8px;top:3px" width="26" height="24" viewBox="8 847 26 24"><path d="M11.800 851.2h16.400M11.800 858h16.400M11.800 864.700h16.400" stroke="#3f78b5" stroke-width="3.6" stroke-linecap="round" fill="none"/></svg>
<div class="a" style="left:1602px;top:1px;width:37px;height:28px;background:linear-gradient(#f8f8f8,#e6e6e6)"></div>
<svg style="left:1530px;top:1px" width="110" height="28" viewBox="1530 845 110 28" fill="none">
<path d="M1545.300 849.8l-7.800 8.200l7.800 8.200M1554.500 849.8l-7.800 8.200l7.800 8.200" stroke="#b7b7b7" stroke-width="3" stroke-linecap="round" stroke-linejoin="round"/>
<path d="M1574.500 849.8l7.800 8.200l-7.800 8.200M1583.700 849.8l7.800 8.200l-7.800 8.200" stroke="#b7b7b7" stroke-width="3" stroke-linecap="round" stroke-linejoin="round"/>
<rect x="1613.4" y="848.8" width="13.400" height="18.400" stroke="#3fa7ad" stroke-width="1.7"/><rect x="1613" y="848" width="14.200" height="4.600" fill="#3fa7ad"/><path d="M1616 850.400h8.200" stroke="#f4f4f4" stroke-width="1.300" stroke-linecap="round"/><path d="M1617 856.200h6.400M1617 859.900h6.400M1617 863.600h6.400" stroke="#3fa7ad" stroke-width="1.700" stroke-linecap="round"/>
</svg>
</div>

<!-- frame.html -->
<svg class="a" style="left:0;top:0" width="1641" height="873" viewBox="0 0 1641 873">
<rect x="0" y="0" width="1641" height="1" fill="#b7b7b7"/>
<rect x="0" y="0" width="1" height="873" fill="#d3d8e4"/>
<rect x="1640" y="0" width="1" height="873" fill="#8f8f8f"/>
<rect x="0" y="872" width="1641" height="1" fill="#a3a3a3"/>
<path d="M0 0H9.500Q2.500 .800 .800 6.500L0 7Z" fill="#2b5593"/>
<path d="M1641 0H1631.500A8.500 8.500 0 0 1 1640 8.500V10H1641Z" fill="#f4f4f4"/>
<path d="M1632 1A8 8 0 0 1 1640 9" fill="none" stroke="#a9a9a9" stroke-width="1"/>
<path d="M0 873H7A6 6 0 0 1 1 867V866H0Z" fill="#6d7480"/>
<path d="M1641 873H1634A6 6 0 0 0 1640 867V866H1641Z" fill="#8a8a8a"/>
</svg>

</body></html>
